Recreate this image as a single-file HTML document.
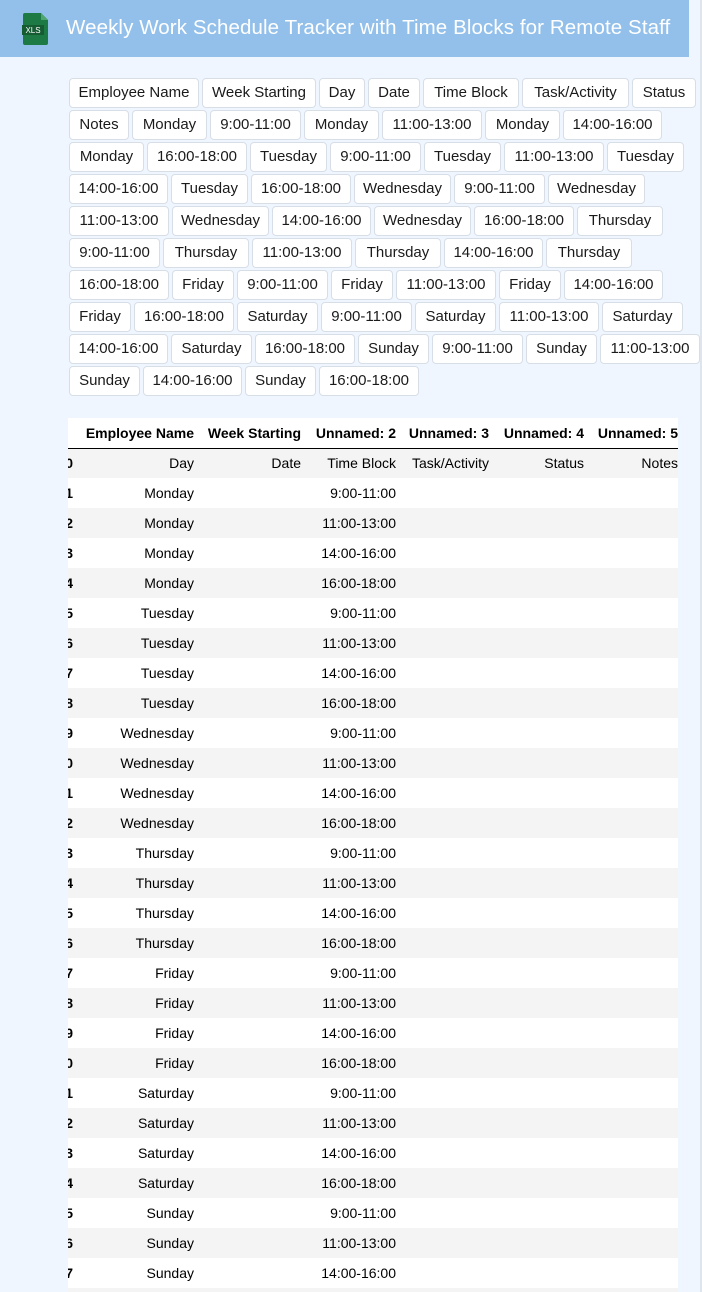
<!DOCTYPE html>
<html><head><meta charset="utf-8"><style>
*{box-sizing:border-box;margin:0;padding:0}
body{width:702px;height:1292px;overflow:hidden;background:#eff6ff;font-family:"Liberation Sans",Arial,sans-serif;position:relative}
.edge{position:absolute;right:0;top:0;width:2px;height:1292px;background:#dfe5ec}
.bar{position:absolute;left:0;top:0;width:689px;height:57px;background:#93c0ea}
.bar h1{position:absolute;left:66px;top:16px;font-size:20.5px;font-weight:normal;color:#fff;white-space:nowrap;letter-spacing:0.1px}
.icon{position:absolute;left:22px;top:13px}
.chips{position:absolute;left:69px;top:78px;width:634px;display:flex;flex-wrap:wrap;gap:2px 3px}
.c{height:30px;line-height:28px;background:#fff;border:1px solid #d8dee6;border-radius:4px;text-align:center;font-size:15px;color:#1a1a1a;white-space:nowrap}
.tw{position:absolute;left:68px;top:418px;width:610px;height:874px;overflow:hidden;background:#fff}
table{border-collapse:collapse;table-layout:fixed;width:637px;position:absolute;left:-22px;top:0;font-size:14px;color:#000}
td,th{height:30px;text-align:right;padding:0 5px 0 0;white-space:nowrap;overflow:hidden}
th{font-weight:bold;border-bottom:1px solid #000}
td.i{font-weight:bold;padding-right:3px}
tbody tr:nth-child(odd){background:#f4f4f4}
</style></head><body>
<div class="edge"></div>
<div class="bar">
<svg class="icon" width="28" height="32" viewBox="0 0 28 32"><path d="M3 0h16l7 7v23a2 2 0 0 1-2 2H3a2 2 0 0 1-2-2V2a2 2 0 0 1 2-2z" fill="#1e7a45"/><path d="M19 0v7h7z" fill="#4fa56f"/><rect x="0" y="12" width="22" height="10" fill="#155c33"/><text x="11" y="20" font-size="8" fill="#fff" text-anchor="middle" font-family="Liberation Sans,sans-serif">XLS</text></svg>
<h1>Weekly Work Schedule Tracker with Time Blocks for Remote Staff</h1>
</div>
<div class="chips" id="ch"></div>
<div class="tw"><table>
<colgroup><col style="width:30px"><col style="width:123px"><col style="width:107px"><col style="width:95px"><col style="width:93px"><col style="width:95px"><col style="width:94px"></colgroup>
<thead><tr><th></th><th>Employee Name</th><th>Week Starting</th><th>Unnamed: 2</th><th>Unnamed: 3</th><th>Unnamed: 4</th><th>Unnamed: 5</th></tr></thead>
<tbody id="tb"></tbody></table></div>
<script>
var W={"Employee Name":130,"Week Starting":114,"Day":46,"Date":52,"Time Block":96,"Task/Activity":107,"Status":64,"Notes":60,"Monday":75,"Tuesday":77,"Wednesday":97,"Thursday":86,"Friday":62,"Saturday":81,"Sunday":71,"9:00-11:00":91,"11:00-13:00":100,"14:00-16:00":99,"16:00-18:00":100};
var days=["Monday","Tuesday","Wednesday","Thursday","Friday","Saturday","Sunday"],tb=["9:00-11:00","11:00-13:00","14:00-16:00","16:00-18:00"];
var L=["Employee Name","Week Starting","Day","Date","Time Block","Task/Activity","Status","Notes"];
days.forEach(function(d){tb.forEach(function(t){L.push(d,t)})});
var h="";L.forEach(function(x){h+='<div class="c" style="width:'+W[x]+'px">'+x+'</div>'});
document.getElementById("ch").innerHTML=h;
var r='<tr><td class="i">0</td><td>Day</td><td>Date</td><td>Time Block</td><td>Task/Activity</td><td>Status</td><td>Notes</td></tr>',n=1;
days.forEach(function(d){tb.forEach(function(t){r+='<tr><td class="i">'+n+'</td><td>'+d+'</td><td></td><td>'+t+'</td><td></td><td></td><td></td></tr>';n++})});
document.getElementById("tb").innerHTML=r;
</script>
</body></html>
